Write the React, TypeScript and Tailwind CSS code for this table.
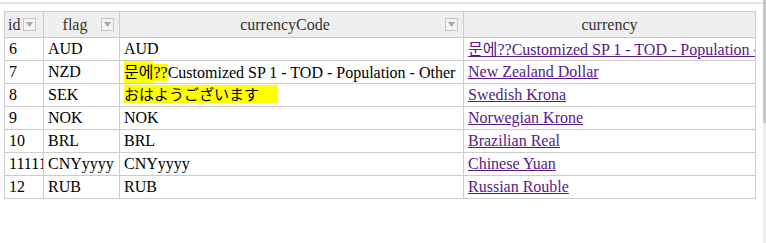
import React from 'react';

type Row = { id: string; flag: string; code: React.ReactNode; currency: string };

const ko = '"Noto Sans CJK KR", "Liberation Sans", sans-serif';
const ja = '"Noto Sans CJK JP", "Liberation Sans", sans-serif';

const rows: Row[] = [
  { id: '6', flag: 'AUD', code: 'AUD', currency: '문에??Customized SP 1 - TOD - Population - Other' },
  {
    id: '7',
    flag: 'NZD',
    code: (
      <>
        <span className="bg-[#ffff00]" style={{ fontFamily: ko }}>문에</span>
        <span className="bg-[#ffff00]">??</span>Customized SP 1 - TOD - Population - Other
      </>
    ),
    currency: 'New Zealand Dollar',
  },
  {
    id: '8',
    flag: 'SEK',
    code: (
      <span className="inline-block w-[154px] bg-[#ffff00] text-[15px] leading-[18px]" style={{ fontFamily: ja }}>
        おはようございます
      </span>
    ),
    currency: 'Swedish Krona',
  },
  { id: '9', flag: 'NOK', code: 'NOK', currency: 'Norwegian Krone' },
  { id: '10', flag: 'BRL', code: 'BRL', currency: 'Brazilian Real' },
  { id: '11111', flag: 'CNYyyyy', code: 'CNYyyyy', currency: 'Chinese Yuan' },
  { id: '12', flag: 'RUB', code: 'RUB', currency: 'Russian Rouble' },
];

function FilterBtn() {
  return (
    <span className="inline-flex h-[13px] w-[13px] shrink-0 items-center justify-center border border-[#c4c4c4] bg-[#f4f4f4]">
      <svg width="7" height="5" viewBox="0 0 7 5">
        <path d="M0 0 H7 L3.5 5 Z" fill="#a9a9a9" />
      </svg>
    </span>
  );
}

function Head({ label, filter }: { label: string; filter?: boolean }) {
  return (
    <th className="h-[26px] border border-[#cccccc] bg-[#efefef] p-0 font-normal text-[#333]">
      <div className="flex items-center px-[5px]">
        <span className="flex-1 text-center">{label}</span>
        {filter ? <FilterBtn /> : null}
      </div>
    </th>
  );
}

const cell = 'h-[23px] overflow-hidden whitespace-nowrap border border-[#cccccc] p-0 pl-[4px] leading-[20px]';

export default function App() {
  const linkFirst = rows[0].currency;
  return (
    <div
      className="relative h-[243px] w-[766px] overflow-hidden bg-white text-[16px] text-black"
      style={{ fontFamily: '"Liberation Serif", "Times New Roman", serif' }}
    >
      <div className="flex h-full">
        <div className="flex-1">
          <div className="mt-[2px] h-[2px] bg-[#e3e3e3]" />
          <div className="pl-[4px] pt-[7px]">
            <table className="w-[751px] table-fixed border-collapse">
              <colgroup>
                <col className="w-[39px]" />
                <col className="w-[76px]" />
                <col className="w-[344px]" />
                <col className="w-[292px]" />
              </colgroup>
              <thead>
                <tr>
                  <th className="h-[26px] border border-[#cccccc] bg-[#efefef] p-0 font-normal text-[#333]">
                    <div className="flex items-center gap-[3px] pl-[3px]">
                      <span>id</span>
                      <FilterBtn />
                    </div>
                  </th>
                  <Head label="flag" filter />
                  <Head label="currencyCode" filter />
                  <Head label="currency" />
                </tr>
              </thead>
              <tbody>
                {rows.map((r, i) => (
                  <tr key={r.id}>
                    <td className={cell}>{r.id}</td>
                    <td className={cell}>{r.flag}</td>
                    <td className={cell}>{r.code}</td>
                    <td className={cell}>
                      <a href="#" className="text-[#551a8b] underline">
                        {i === 0 ? (
                          <>
                            <span style={{ fontFamily: ko }}>문에</span>
                            {linkFirst.slice(2)}
                          </>
                        ) : (
                          r.currency
                        )}
                      </a>
                    </td>
                  </tr>
                ))}
              </tbody>
            </table>
          </div>
        </div>
        <div className="flex w-[3px] flex-col">
          <div className="h-[123px] bg-[#c8c8c8]" />
          <div className="flex-1 bg-[#efefef]" />
        </div>
      </div>
    </div>
  );
}
